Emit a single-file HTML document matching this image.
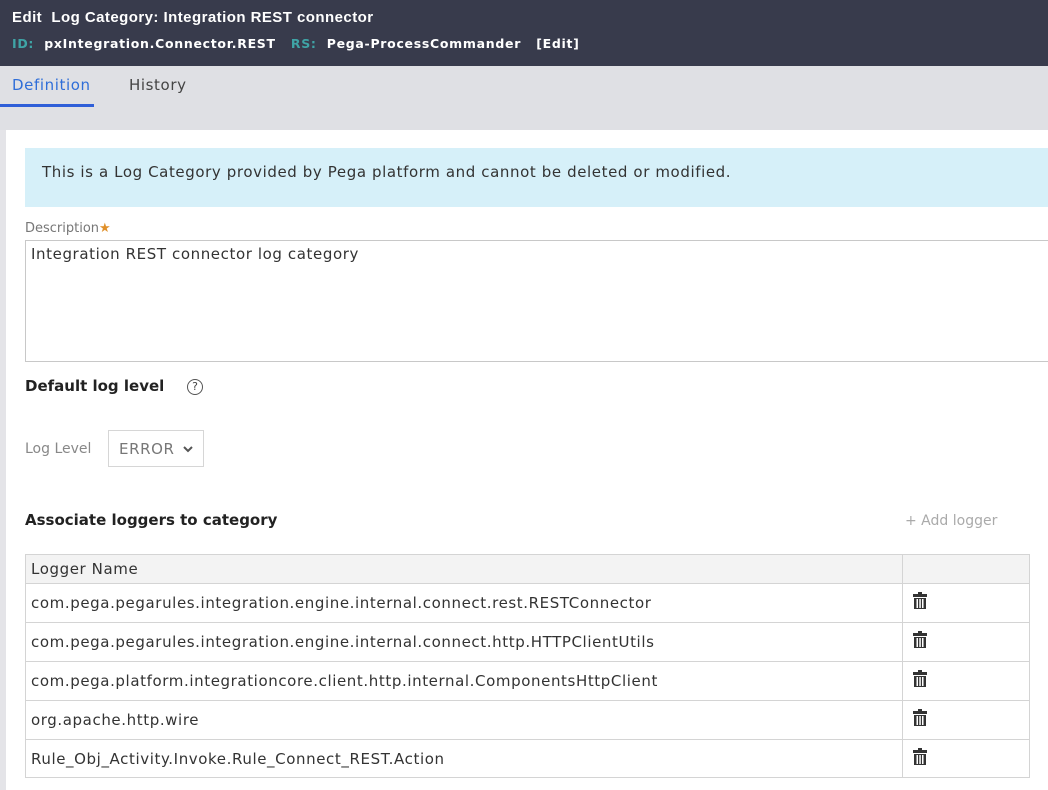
<!DOCTYPE html>
<html><head><style>
*{margin:0;padding:0;box-sizing:border-box}
body{width:1048px;height:790px;overflow:hidden;background:#e4e4e8;font-family:"DejaVu Sans",sans-serif;color:#333;position:relative}
.abs{position:absolute;white-space:nowrap}
.t{font-size:15px;letter-spacing:0.6px}
.hdr{left:0;top:0;width:1048px;height:66px;background:#383b4c}
.tabs{left:0;top:66px;width:1048px;height:64px;background:#dfe0e4}
.panel{left:6px;top:130px;width:1042px;height:660px;background:#fff}
td,th{border:1px solid #d4d4d4;font-size:15px;letter-spacing:0.6px;font-weight:normal;text-align:left;padding-left:5px;color:#333}
table{border-collapse:collapse;position:absolute;left:25px;top:554px;width:1005px}
</style></head><body>
<div class="abs hdr"></div>
<div class="abs" style="left:12px;top:9px;color:#fff;font-weight:bold;font-size:15px;letter-spacing:0.45px;font-family:'Liberation Sans',sans-serif">Edit&nbsp; Log Category: Integration REST connector</div>
<div class="abs" style="left:12px;top:36px;font-weight:bold;font-size:12.5px;letter-spacing:0.7px;color:#fff"><span style="color:#3fa4a6">ID:</span>&nbsp; pxIntegration.Connector.REST &nbsp;&nbsp;<span style="color:#3fa4a6">RS:</span>&nbsp; Pega-ProcessCommander &nbsp;&nbsp;[Edit]</div>
<div class="abs tabs"></div>
<div class="abs t" style="left:12px;top:76px;color:#2f6ed8">Definition</div>
<div class="abs" style="left:0;top:104px;width:94px;height:3px;background:#2f5fd8"></div>
<div class="abs t" style="left:129px;top:76px;color:#444">History</div>
<div class="abs panel"></div>
<div class="abs" style="left:25px;top:148px;width:1023px;height:59px;background:#d6f0f9"></div>
<div class="abs t" style="left:42px;top:163px;color:#333">This is a Log Category provided by Pega platform and cannot be deleted or modified.</div>
<div class="abs" style="left:25px;top:221px;font-size:13px;color:#777">Description<span style="color:#e0902a">&#9733;</span></div>
<div class="abs" style="left:25px;top:240px;width:1030px;height:122px;border:1px solid #c8c8c8"></div>
<div class="abs t" style="left:31px;top:245px;color:#333">Integration REST connector log category</div>
<div class="abs" style="left:25px;top:377px;font-size:15px;font-weight:bold;color:#222">Default log level</div>
<div class="abs" style="left:187px;top:379px;width:16px;height:16px;border:1.3px solid #555;border-radius:50%;font-size:11px;text-align:center;line-height:14px;color:#444">?</div>
<div class="abs" style="left:25px;top:441px;font-size:14px;color:#888">Log Level</div>
<div class="abs" style="left:108px;top:430px;width:96px;height:37px;border:1px solid #d6d6d6"></div>
<div class="abs t" style="left:119px;top:440px;color:#777">ERROR</div>
<svg class="abs" style="left:183px;top:445px" width="10" height="8"><path d="M1 2l4 4 4-4" stroke="#555" stroke-width="2" fill="none"/></svg>
<div class="abs" style="left:25px;top:511px;font-size:15px;font-weight:bold;color:#222">Associate loggers to category</div>
<div class="abs" style="left:905px;top:513px;font-size:14px;color:#aaa">+ Add logger</div>
<table>
<tr style="background:#f3f3f3;height:29px"><th style="width:877px">Logger Name</th><th></th></tr>
<tr style="height:39px"><td>com.pega.pegarules.integration.engine.internal.connect.rest.RESTConnector</td><td>T</td></tr>
<tr style="height:39px"><td>com.pega.pegarules.integration.engine.internal.connect.http.HTTPClientUtils</td><td>T</td></tr>
<tr style="height:39px"><td>com.pega.platform.integrationcore.client.http.internal.ComponentsHttpClient</td><td>T</td></tr>
<tr style="height:39px"><td>org.apache.http.wire</td><td>T</td></tr>
<tr style="height:38px"><td>Rule_Obj_Activity.Invoke.Rule_Connect_REST.Action</td><td>T</td></tr>
</table>
<script>
document.querySelectorAll('td').forEach(function(td){if(td.textContent==='T'){td.style.paddingLeft='9px';td.innerHTML='<svg width="16" height="18" viewBox="0 0 16 18"><rect x="6" y="0" width="4" height="2" fill="#333"/><rect x="1" y="2" width="14" height="3" fill="#333"/><rect x="2" y="6" width="12" height="11" fill="#333"/><rect x="4.5" y="7" width="1.5" height="9" fill="#fff"/><rect x="7.3" y="7" width="1.5" height="9" fill="#fff"/><rect x="10" y="7" width="1.5" height="9" fill="#fff"/></svg>';}});
</script>
</body></html>
